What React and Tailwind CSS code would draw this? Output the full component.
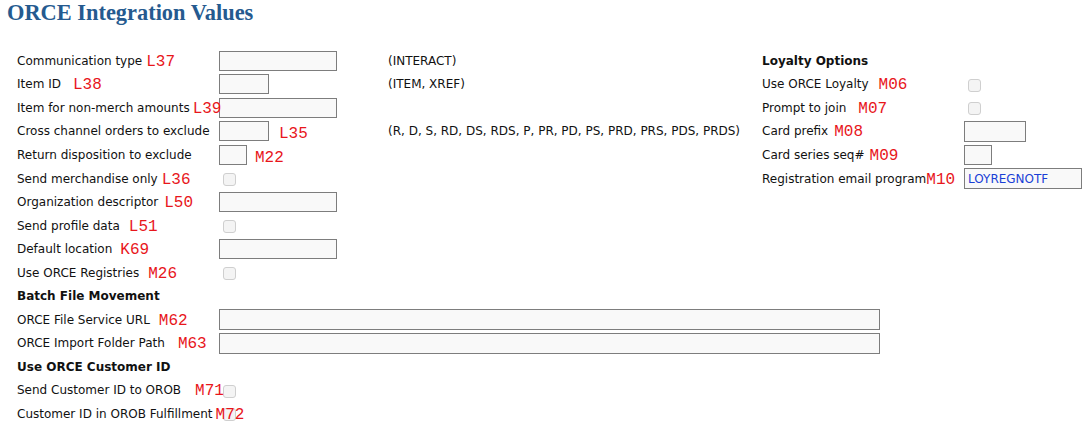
import React from 'react';

const font = { fontFamily: '"DejaVu Sans", Verdana, sans-serif' };

const Code = ({ children, className = '' }) => (
  <span className={`text-[16px] leading-none text-[#e8161b] font-['Liberation_Mono',monospace] relative top-[1px] ${className}`}>
    {children}
  </span>
);

const Label = ({ text, code, gap = 'ml-[9px]', bold = false }) => (
  <div className={`w-[202px] shrink-0 whitespace-nowrap ${bold ? 'font-bold' : ''}`}>
    {text}
    {code && <Code className={gap}>{code}</Code>}
  </div>
);

const TextBox = ({ w = 'w-[118px]', h = 'h-[20px]', value }) => (
  <div className={`${w} ${h} border border-[#7d7d7d] bg-[#f9f9f9] shrink-0 flex items-center px-[3px] text-[#1a3fd6]`}>
    {value}
  </div>
);

const Check = () => (
  <div className="w-[13px] h-[13px] ml-[4px] mt-[2px] rounded-[3px] border border-[#cfcfcf] bg-[#f4f4f4] shrink-0" />
);

const Row = ({ children }) => (
  <div className="flex items-center h-[23.55px]">{children}</div>
);

export default function App() {
  return (
    <div className="bg-white w-[1084px] h-[429px] overflow-hidden text-[#111] text-[12px]" style={font}>
      <h1 className="pl-[7px] pt-[1px] h-[49px] text-[22.4px] font-bold text-[#255a8f] font-['Liberation_Serif',serif] leading-[24px]">
        ORCE Integration Values
      </h1>
      <div className="pl-[17px]">
        <Row>
          <Label text="Communication type" code="L37" gap="ml-[4px]" />
          <div className="w-[169px] shrink-0"><TextBox /></div>
          <div className="w-[374px] shrink-0">(INTERACT)</div>
          <div className="w-[202px] shrink-0 font-bold">Loyalty Options</div>
        </Row>
        <Row>
          <Label text="Item ID" code="L38" gap="ml-[12px]" />
          <div className="w-[169px] shrink-0"><TextBox w="w-[50px]" /></div>
          <div className="w-[374px] shrink-0">(ITEM, XREF)</div>
          <Label text="Use ORCE Loyalty" code="M06" gap="ml-[10px]" />
          <Check />
        </Row>
        <Row>
          <Label text="Item for non-merch amounts" code="L39" gap="ml-[3px]" />
          <div className="w-[169px] shrink-0"><TextBox /></div>
          <div className="w-[374px] shrink-0" />
          <Label text="Prompt to join" code="M07" gap="ml-[12px]" />
          <Check />
        </Row>
        <Row>
          <Label text="Cross channel orders to exclude" />
          <div className="w-[169px] shrink-0 flex items-center">
            <TextBox w="w-[50px]" />
            <Code className="ml-[10px] top-[3px]">L35</Code>
          </div>
          <div className="w-[374px] shrink-0 whitespace-nowrap">(R, D, S, RD, DS, RDS, P, PR, PD, PS, PRD, PRS, PDS, PRDS)</div>
          <Label text="Card prefix" code="M08" gap="ml-[6px]" />
          <TextBox w="w-[62px]" h="h-[21px]" />
        </Row>
        <Row>
          <Label text="Return disposition to exclude" />
          <div className="w-[169px] shrink-0 flex items-center">
            <TextBox w="w-[28px]" />
            <Code className="ml-[8px] top-[3px]">M22</Code>
          </div>
          <div className="w-[374px] shrink-0" />
          <Label text="Card series seq#" code="M09" gap="ml-[5px]" />
          <TextBox w="w-[28px]" />
        </Row>
        <Row>
          <Label text="Send merchandise only" code="L36" gap="ml-[4px]" />
          <div className="w-[169px] shrink-0"><Check /></div>
          <div className="w-[374px] shrink-0" />
          <Label text="Registration email program" code="M10" gap="ml-0" />
          <TextBox w="w-[118px]" h="h-[21px]" value="LOYREGNOTF" />
        </Row>
        <Row>
          <Label text="Organization descriptor" code="L50" gap="ml-[6px]" />
          <TextBox />
        </Row>
        <Row>
          <Label text="Send profile data" code="L51" gap="ml-[9px]" />
          <Check />
        </Row>
        <Row>
          <Label text="Default location" code="K69" gap="ml-[8px]" />
          <TextBox />
        </Row>
        <Row>
          <Label text="Use ORCE Registries" code="M26" gap="ml-[9px]" />
          <Check />
        </Row>
        <Row>
          <div className="font-bold">Batch File Movement</div>
        </Row>
        <Row>
          <Label text="ORCE File Service URL" code="M62" gap="ml-[9px]" />
          <TextBox w="w-[661px]" h="h-[21px]" />
        </Row>
        <Row>
          <Label text="ORCE Import Folder Path" code="M63" gap="ml-[13px]" />
          <TextBox w="w-[661px]" h="h-[21px]" />
        </Row>
        <Row>
          <div className="font-bold">Use ORCE Customer ID</div>
        </Row>
        <Row>
          <Label text="Send Customer ID to OROB" code="M71" gap="ml-[14px]" />
          <Check />
        </Row>
        <Row>
          <Label text="Customer ID in OROB Fulfillment" code="M72" gap="ml-[3px]" />
          <Check />
        </Row>
      </div>
    </div>
  );
}
